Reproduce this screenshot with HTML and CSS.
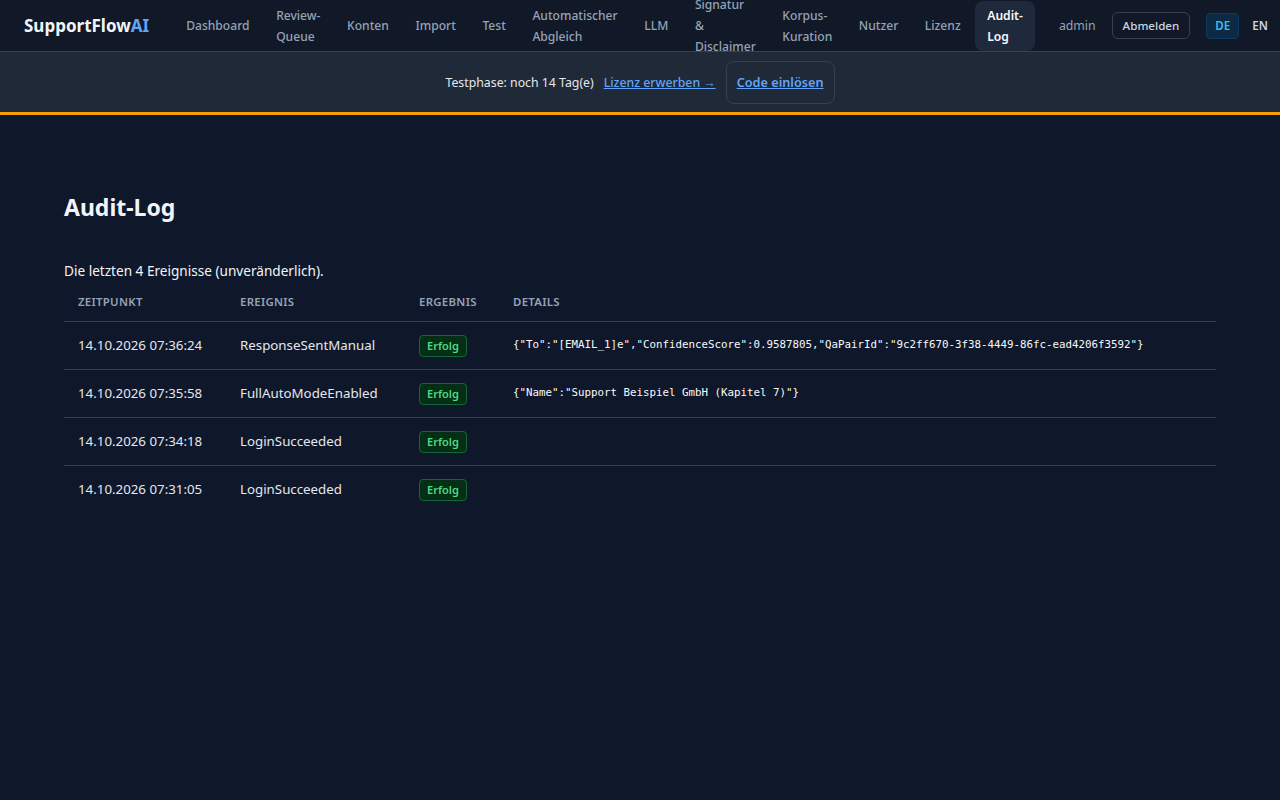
FILE: index.html
```html
<!DOCTYPE html>
<html lang="de">
<head>
  <meta charset="UTF-8" />
  <meta name="viewport" content="width=device-width, initial-scale=1.0" />
  <title>SupportFlowAI – Audit-Log</title>
  <link rel="stylesheet" href="styles.css">
</head>
<body>
  <nav id="topbar">
    <a href="#" class="brand">SupportFlow<span>AI</span></a>
    <div class="nav-links">
      <a href="#">Dashboard</a>
      <a href="#">Review-Queue</a>
      <a href="#">Konten</a>
      <a href="#">Import</a>
      <a href="#">Test</a>
      <a href="#">Automatischer Abgleich</a>
      <a href="#">LLM</a>
      <a href="#">Signatur &amp; Disclaimer</a>
      <a href="#">Korpus-Kuration</a>
      <a href="#">Nutzer</a>
      <a href="#">Lizenz</a>
      <a href="#" class="active">Audit-Log</a>
    </div>
    <div class="nav-user">
      <span class="user-name">admin</span>
      <button class="btn-logout">Abmelden</button>
      <div class="lang">
        <button class="lang-btn on">DE</button>
        <button class="lang-btn">EN</button>
      </div>
    </div>
  </nav>

  <div id="trial-banner">
    <span>Testphase: noch 14 Tag(e)</span>
    <a href="#" class="buy-link">Lizenz erwerben →</a>
    <button class="redeem">Code einlösen</button>
  </div>

  <main id="content">
    <h1>Audit-Log</h1>
    <p class="intro">Die letzten 4 Ereignisse (unveränderlich).</p>
    <table class="audit">
      <thead>
        <tr>
          <th class="c-time">Zeitpunkt</th>
          <th class="c-event">Ereignis</th>
          <th class="c-result">Ergebnis</th>
          <th>Details</th>
        </tr>
      </thead>
      <tbody>
        <tr>
          <td>14.10.2026 07:36:24</td>
          <td>ResponseSentManual</td>
          <td><span class="badge">Erfolg</span></td>
          <td class="details">{"To":"[EMAIL_1]e","ConfidenceScore":0.9587805,"QaPairId":"9c2ff670-3f38-4449-86fc-ead4206f3592"}</td>
        </tr>
        <tr>
          <td>14.10.2026 07:35:58</td>
          <td>FullAutoModeEnabled</td>
          <td><span class="badge">Erfolg</span></td>
          <td class="details">{"Name":"Support Beispiel GmbH (Kapitel 7)"}</td>
        </tr>
        <tr>
          <td>14.10.2026 07:34:18</td>
          <td>LoginSucceeded</td>
          <td><span class="badge">Erfolg</span></td>
          <td class="details"></td>
        </tr>
        <tr>
          <td>14.10.2026 07:31:05</td>
          <td>LoginSucceeded</td>
          <td><span class="badge">Erfolg</span></td>
          <td class="details"></td>
        </tr>
      </tbody>
    </table>
  </main>
</body>
</html>
```

FILE: styles.css
```css
* { box-sizing: border-box; }
html, body { height: 100%; }
body {
  margin: 0;
  font-family: 'Segoe UI', 'Noto Sans', sans-serif;
  background: #0f172a;
  color: #e5e7eb;
  font-size: 13.2px;
}
a { color: inherit; text-decoration: none; }
button { font-family: inherit; cursor: pointer; }

/* top navigation */
#topbar {
  height: 52px;
  display: flex; align-items: center;
  padding: 0 24px;
  background: #111827;
  border-bottom: 1px solid #374151;
}
.brand {
  font-size: 17px; font-weight: 700; color: #f1f5f9;
  margin-right: 25px; white-space: nowrap;
}
.brand span { color: #60a5fa; }
.nav-links { display: flex; align-items: center; gap: 2.6px; }
.nav-links a {
  width: min-content;
  padding: 4px 12px; border-radius: 8px;
  font-size: 12.1px; font-weight: 500; line-height: 21px;
  color: #94a3b8;
}
.nav-links a.active { background: #1e293b; color: #f8fafc; font-weight: 600; }
.nav-user { display: flex; align-items: center; margin-left: 24px; }
.user-name { font-size: 12.3px; color: #94a3b8; margin-right: 16px; }
.btn-logout {
  background: transparent; color: #cbd5e1;
  border: 1px solid #374151; border-radius: 6px;
  font-size: 11.6px; font-weight: 500;
  height: 27px; padding: 0 10px;
}
.lang { display: flex; align-items: center; gap: 4px; margin-left: 16px; }
.lang-btn {
  background: transparent; border: 1px solid transparent; border-radius: 4px;
  color: #cbd5e1; font-size: 11.6px; font-weight: 600;
  height: 26px; padding: 0 8px;
}
.lang-btn.on { background: #0c2a44; border-color: #0f3a5e; color: #38bdf8; }

/* trial banner */
#trial-banner {
  display: flex; align-items: center; justify-content: center; gap: 10px;
  height: 63px; padding: 0 16px;
  background: #1f2937;
  border-bottom: 3px solid #f59e0b;
  font-size: 12.3px; color: #e5e7eb;
}
.buy-link { color: #60a5fa; text-decoration: underline; font-weight: 500; }
.redeem {
  background: transparent; color: #60a5fa;
  border: 1px solid #374151; border-radius: 8px;
  height: 43px; padding: 0 10px;
  font-size: 12.7px; font-weight: 600; text-decoration: underline;
}

/* main */
#content { padding: 76px 64px 40px; }
h1 { margin: 0 0 38px; font-size: 23px; font-weight: 700; color: #f1f5f9; line-height: 32px; }
.intro { margin: 0 0 2px; font-size: 13.6px; color: #f1f5f9; line-height: 20px; }
.audit { width: 100%; border-collapse: collapse; table-layout: fixed; }
.audit th {
  text-align: left; padding: 10px 14px 10px;
  font-size: 11.4px; font-weight: 600; letter-spacing: 0.3px;
  text-transform: uppercase; color: #94a3b8; line-height: 18px;
  border-bottom: 1px solid #334155;
}
.c-time { width: 162px; }
.c-event { width: 179px; }
.c-result { width: 94px; }
.audit td {
  padding: 12px 14px; font-size: 13.3px; color: #e5e7eb; line-height: 22.5px;
  border-bottom: 1px solid #334155; vertical-align: middle; white-space: nowrap;
}
.audit tbody tr:last-child td { border-bottom: none; }
.badge {
  display: inline-block; height: 22px; line-height: 20px; padding: 0 7px;
  background: #052e16; border: 1px solid #166534; border-radius: 4px;
  color: #4ade80; font-size: 11px; font-weight: 600;
}
.audit td.details { font-family: 'DejaVu Sans Mono', monospace; font-size: 10.8px; color: #f8fafc; }
```
